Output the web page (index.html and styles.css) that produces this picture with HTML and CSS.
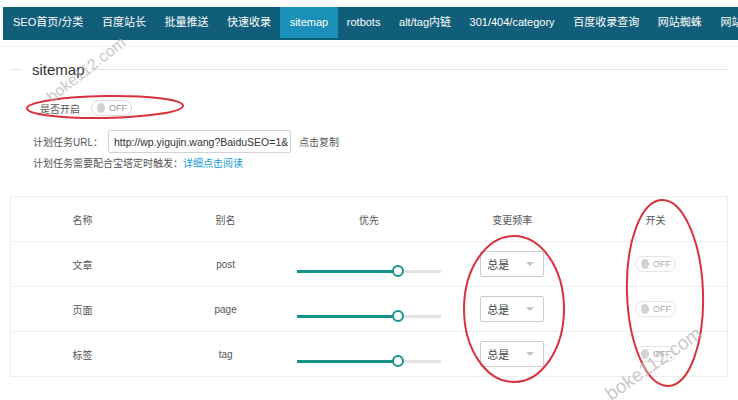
FILE: index.html
```html
<!DOCTYPE html>
<html lang="zh-CN">
<head>
    <meta charset="UTF-8">
    <meta name="viewport" content="width=device-width, initial-scale=1.0">
    <title>sitemap - BaiduSEO</title>
    <link rel="stylesheet" href="styles.css">
</head>
<body>
    <ul class="nav">
        <li>SEO首页/分类</li>
        <li>百度站长</li>
        <li>批量推送</li>
        <li>快速收录</li>
        <li class="active">sitemap</li>
        <li>rotbots</li>
        <li>alt/tag内链</li>
        <li>301/404/category</li>
        <li>百度收录查询</li>
        <li>网站蜘蛛</li>
        <li>网站地图</li>
    </ul>

    <div class="main">
        <fieldset class="field-title">
            <legend>sitemap</legend>
        </fieldset>

        <div class="switch-row">
            <span class="label">是否开启</span>
            <span class="switch"><i></i><em>OFF</em></span>
        </div>

        <div class="url-row">
            <span class="label">计划任务URL：</span>
            <input class="url-input" type="text" value="http://wp.yigujin.wang?BaiduSEO=1&amp;">
            <span class="copy">点击复制</span>
        </div>

        <div class="note">计划任务需要配合宝塔定时触发：<a href="#">详细点击阅读</a></div>

        <table class="map-table">
            <tr>
                <th>名称</th>
                <th>别名</th>
                <th>优先</th>
                <th>变更频率</th>
                <th>开关</th>
            </tr>
            <tr>
                <td>文章</td>
                <td>post</td>
                <td><div class="slider"><div class="bar" style="width: 70%"></div><span class="knob" style="left: 70%"></span></div></td>
                <td><div class="select"><span>总是</span><i class="arrow"></i></div></td>
                <td><span class="switch small"><i></i><em>OFF</em></span></td>
            </tr>
            <tr>
                <td>页面</td>
                <td>page</td>
                <td><div class="slider"><div class="bar" style="width: 70%"></div><span class="knob" style="left: 70%"></span></div></td>
                <td><div class="select"><span>总是</span><i class="arrow"></i></div></td>
                <td><span class="switch small"><i></i><em>OFF</em></span></td>
            </tr>
            <tr>
                <td>标签</td>
                <td>tag</td>
                <td><div class="slider"><div class="bar" style="width: 70%"></div><span class="knob" style="left: 70%"></span></div></td>
                <td><div class="select"><span>总是</span><i class="arrow"></i></div></td>
                <td><span class="switch small"><i></i><em>OFF</em></span></td>
            </tr>
        </table>
    </div>

    <!-- annotations drawn over the screenshot -->
    <svg class="marks" width="738" height="400" viewBox="0 0 738 400">
        <ellipse cx="105" cy="107" rx="78" ry="11" transform="rotate(-1 105 107)"></ellipse>
        <ellipse cx="514" cy="309" rx="50" ry="73"></ellipse>
        <ellipse cx="665" cy="293" rx="38" ry="93" transform="rotate(-2 665 293)"></ellipse>
        <text class="wm" transform="translate(52 103) rotate(-38)" font-size="16">boke112.com</text>
        <text class="wm" transform="translate(611 401) rotate(-35)" font-size="19">boke112.com</text>
    </svg>
</body>
</html>
```

FILE: styles.css
```css
body {
    margin: 0;
    font-family: "Liberation Sans", "Noto Sans CJK SC", sans-serif;
    font-size: 10px;
    color: #555;
    background: #fff;
    overflow: hidden;
}
.nav {
    display: flex;
    margin: 7px 0 0 3px;
    padding: 0;
    list-style: none;
    height: 33px;
    background: #115e7a;
    overflow: hidden;
    white-space: nowrap;
}
.nav li {
    flex: none;
    padding: 0 9.3px;
    height: 31px;
    line-height: 31px;
    font-size: 11px;
    color: #fff;
}
.nav li:first-child {
    padding-left: 10px;
}
.nav li.active {
    background: #1a90b9;
}
.main {
    margin-top: 6px;
    padding: 0 10px;
    border-top: 1px solid #f2f2f2;
}
.field-title {
    margin: 14px 0 0;
    padding: 0;
    border: none;
    border-top: 1px solid #e6e6e6;
}
.field-title legend {
    margin-left: 12px;
    padding: 0 10px;
    font-size: 15px;
    color: #333;
}
.switch-row {
    display: flex;
    align-items: center;
    margin: 22px 0 0 30px;
    height: 16px;
    gap: 11px;
}
.switch {
    display: inline-flex;
    align-items: center;
    box-sizing: border-box;
    width: 41px;
    height: 16px;
    padding: 0 4px 0 5px;
    gap: 4px;
    border: 1px solid #d9d9d9;
    border-radius: 9px;
    background: #fff;
    vertical-align: middle;
}
.switch i {
    width: 10px;
    height: 10px;
    border-radius: 50%;
    background: #d2d2d2;
}
.switch em {
    font-style: normal;
    font-size: 9px;
    color: #999;
}
.switch.small {
    border-color: #e4e4e4;
}
.switch.small em {
    color: #aaa;
}
.url-row {
    display: flex;
    align-items: center;
    margin: 14px 0 0 23px;
    height: 23px;
}
.url-input {
    box-sizing: border-box;
    width: 183px;
    height: 23px;
    margin: 0 8px 0 5px;
    padding: 0 2px 0 5px;
    border: 1px solid #d2d2d2;
    border-radius: 2px;
    font-family: "Liberation Sans", sans-serif;
    font-size: 10.5px;
    color: #333;
}
.note {
    margin: 4px 0 0 23px;
    line-height: 14px;
}
.note a {
    color: #1a9ad6;
    text-decoration: none;
}
.map-table {
    width: 100%;
    margin-top: 25px;
    border-collapse: collapse;
    table-layout: fixed;
    border: 1px solid #eee;
}
.map-table th,
.map-table td {
    height: 44px;
    padding: 0;
    text-align: center;
    font-weight: normal;
    border-bottom: 1px solid #eee;
    color: #555;
}
.slider {
    position: relative;
    height: 3px;
    margin-top: 14px;
    background: #e2e2e2;
}
.slider .bar {
    height: 100%;
    background: #16948a;
}
.slider .knob {
    position: absolute;
    top: 50%;
    width: 8px;
    height: 8px;
    border: 2px solid #16948a;
    border-radius: 50%;
    background: #fff;
    transform: translate(-50%, -50%);
}
.select {
    display: flex;
    align-items: center;
    justify-content: space-between;
    box-sizing: border-box;
    width: 64px;
    height: 26px;
    margin: 0 auto;
    padding: 0 9px 0 6px;
    border: 1px solid #ccc;
    border-radius: 2px;
    font-size: 11px;
    color: #444;
}
.select .arrow {
    width: 0;
    height: 0;
    border-top: 4px solid #c2c2c2;
    border-left: 4px solid transparent;
    border-right: 4px solid transparent;
}
.marks {
    position: absolute;
    top: 0;
    left: 0;
    pointer-events: none;
}
.marks ellipse {
    fill: none;
    stroke: #d8323a;
    stroke-width: 2;
}
.marks .wm {
    font-family: "Liberation Sans", sans-serif;
    fill: #b8b8b8;
    opacity: 0.75;
}
```
